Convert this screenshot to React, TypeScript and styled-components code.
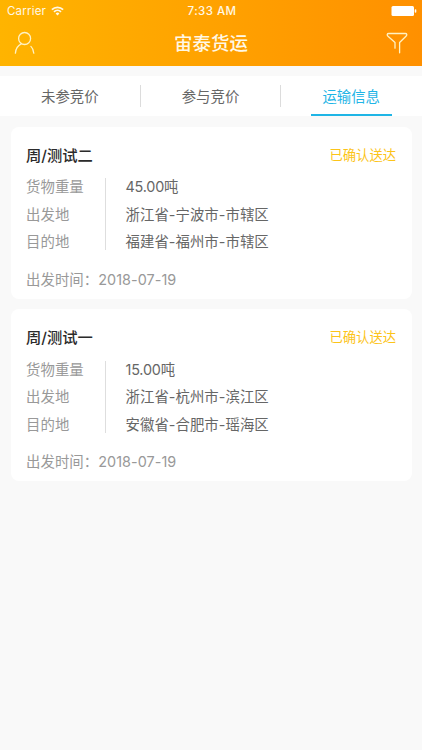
import React from "react";
import styled, { createGlobalStyle } from "styled-components";

const GlobalStyle = createGlobalStyle`
  * { box-sizing: border-box; }
  html, body { margin: 0; padding: 0; background: #f9f9f9; }
  body { font-family: Inter, "Noto Sans CJK SC", sans-serif; overflow: hidden; }
`;

const Screen = styled.div`
  width: 422px;
  height: 750px;
  display: flex;
  flex-direction: column;
  background: #f9f9f9;
`;

const Header = styled.header`
  height: 65.5px;
  flex: none;
  color: #fff8e6;
  background: linear-gradient(90deg, #ffb400 0%, #ff9000 100%);
`;

const StatusBar = styled.div`
  height: 22px;
  display: grid;
  grid-template-columns: 1fr auto 1fr;
  align-items: center;
  padding: 0 5px 0 7px;
  font-size: 11.5px;
  line-height: 22px;
`;

const Carrier = styled.div`
  display: flex;
  align-items: center;
  gap: 5px;
  letter-spacing: 0.2px;
`;

const Clock = styled.div`
  font-size: 11.5px;
  font-weight: 500;
  letter-spacing: 0.45px;
`;

const BatteryIcon = styled.svg`
  justify-self: end;
  display: block;
`;

const NavBar = styled.div`
  height: 42px;
  display: grid;
  grid-template-columns: 48px 1fr 48px;
  align-items: center;
`;

const NavButton = styled.button<{ $end?: boolean }>`
  display: flex;
  justify-content: ${(p) => (p.$end ? "flex-end" : "flex-start")};
  padding: ${(p) => (p.$end ? "0 14px 0 0" : "0 0 0 14px")};
  border: 0;
  background: none;
  color: #fff2c4;
`;

const Title = styled.h1`
  margin: 0;
  text-align: center;
  font-size: 18.5px;
  line-height: 28px;
  font-weight: 500;
`;

const Tabs = styled.nav`
  height: 40.5px;
  flex: none;
  margin-top: 10px;
  display: grid;
  grid-template-columns: 1fr 1fr 1fr;
  background: #fff;
`;

const Tab = styled.div<{ $active?: boolean; $divided?: boolean }>`
  display: flex;
  flex-direction: column;
  align-items: center;
  justify-content: space-between;
  padding: 9px 1px 0 0;
  font-size: 14.4px;
  line-height: 23px;
  color: ${(p) => (p.$active ? "#1fb5e6" : "#666")};
  background: ${(p) =>
    p.$divided ? "linear-gradient(#dcdcdc, #dcdcdc) right 9px / 1px 22px no-repeat" : "none"};
`;

const Underline = styled.div`
  width: 81px;
  height: 2px;
  background: #1fb5e6;
`;

const List = styled.main`
  display: flex;
  flex-direction: column;
  gap: 10.5px;
  padding: 10.5px;
`;

const Card = styled.article`
  height: 172px;
  padding: 17px 15.5px 0;
  border-radius: 8px;
  background: #fff;
`;

const CardHead = styled.div`
  display: flex;
  align-items: center;
  justify-content: space-between;
  height: 24px;
`;

const Name = styled.h2`
  margin: 0;
  font-size: 15.3px;
  line-height: 24px;
  font-weight: 500;
  color: #2b2b2b;
`;

const Status = styled.span`
  padding-bottom: 1px;
  font-size: 13.3px;
  line-height: 23px;
  color: #fcc419;
`;

const Details = styled.div`
  display: flex;
  height: 72px;
  margin-top: 10.5px;
  align-items: center;
`;

const Labels = styled.div`
  width: 80px;
  flex: none;
  border-right: 1px solid #dedede;
  height: 72px;
  display: flex;
  flex-direction: column;
  justify-content: center;
  color: #999;
`;

const Values = styled.div`
  padding-left: 19.5px;
  color: #666;
`;

const Line = styled.div<{ $numeric?: boolean }>`
  height: 27.5px;
  flex: none;
  padding-top: 0.5px;
  font-size: 14.4px;
  line-height: 27px;
  letter-spacing: ${(p) => (p.$numeric ? "-0.2px" : "0.05px")};
  white-space: nowrap;
`;

const Departure = styled.div`
  margin-top: 17.5px;
  font-size: 14.4px;
  line-height: 24px;
  letter-spacing: 0.05px;
  color: #999;
`;

const shipments = [
  {
    name: "周/测试二",
    weight: "45.00吨",
    from: "浙江省-宁波市-市辖区",
    to: "福建省-福州市-市辖区",
    date: "2018-07-19",
  },
  {
    name: "周/测试一",
    weight: "15.00吨",
    from: "浙江省-杭州市-滨江区",
    to: "安徽省-合肥市-瑶海区",
    date: "2018-07-19",
  },
];

const WifiIcon = () => (
  <svg width="13" height="10" viewBox="0 0 13 10" fill="none" stroke="currentColor" strokeWidth="1.7">
    <path d="M0.9 3.7a7.9 7.9 0 0 1 11.2 0" />
    <path d="M3 5.9a5 5 0 0 1 7 0" />
    <path d="M6.5 9.4 4.6 7.4a2.7 2.7 0 0 1 3.8 0z" fill="currentColor" stroke="none" />
  </svg>
);

const UserIcon = () => (
  <svg width="22" height="24" viewBox="0 0 22 24" fill="none" stroke="currentColor" strokeWidth="1.3" strokeLinecap="round">
    <circle cx="10.6" cy="7.5" r="6" />
    <path d="M1.400 22.200c.3-4.500 2.300-7.600 5.900-9.300" />
    <path d="M16.900 15.400c1.700 1.600 2.700 3.900 2.900 6.800" />
  </svg>
);

const FilterIcon = () => (
  <svg width="22" height="22" viewBox="0 0 22 22" fill="none" stroke="currentColor" strokeWidth="1.3" strokeLinecap="round" strokeLinejoin="round">
    <path d="M9 16.200v-5.700L2 4.200C.7 2.900 1 1.500 2.700 1.500h16.600c1.700 0 2 1.400.7 2.700l-6.400 6.300v10.300" />
  </svg>
);

export default function App() {
  return (
    <Screen>
      <GlobalStyle />
      <Header>
        <StatusBar>
          <Carrier>
            Carrier <WifiIcon />
          </Carrier>
          <Clock>7:33 AM</Clock>
          <BatteryIcon width="26" height="10" viewBox="0 0 26 10" fill="#fff">
            <rect x="0.5" y="0" width="22.5" height="10" rx="1.5" />
            <rect x="23.7" y="3.2" width="1.6" height="3.6" rx="0.8" />
          </BatteryIcon>
        </StatusBar>
        <NavBar>
          <NavButton aria-label="个人中心">
            <UserIcon />
          </NavButton>
          <Title>宙泰货运</Title>
          <NavButton $end aria-label="筛选">
            <FilterIcon />
          </NavButton>
        </NavBar>
      </Header>
      <Tabs>
        <Tab $divided>未参竞价</Tab>
        <Tab $divided>参与竞价</Tab>
        <Tab $active>
          运输信息
          <Underline />
        </Tab>
      </Tabs>
      <List>
        {shipments.map((s) => (
          <Card key={s.name}>
            <CardHead>
              <Name>{s.name}</Name>
              <Status>已确认送达</Status>
            </CardHead>
            <Details>
              <Labels>
                <Line>货物重量</Line>
                <Line>出发地</Line>
                <Line>目的地</Line>
              </Labels>
              <Values>
                <Line $numeric>{s.weight}</Line>
                <Line>{s.from}</Line>
                <Line>{s.to}</Line>
              </Values>
            </Details>
            <Departure>出发时间：{s.date}</Departure>
          </Card>
        ))}
      </List>
    </Screen>
  );
}
